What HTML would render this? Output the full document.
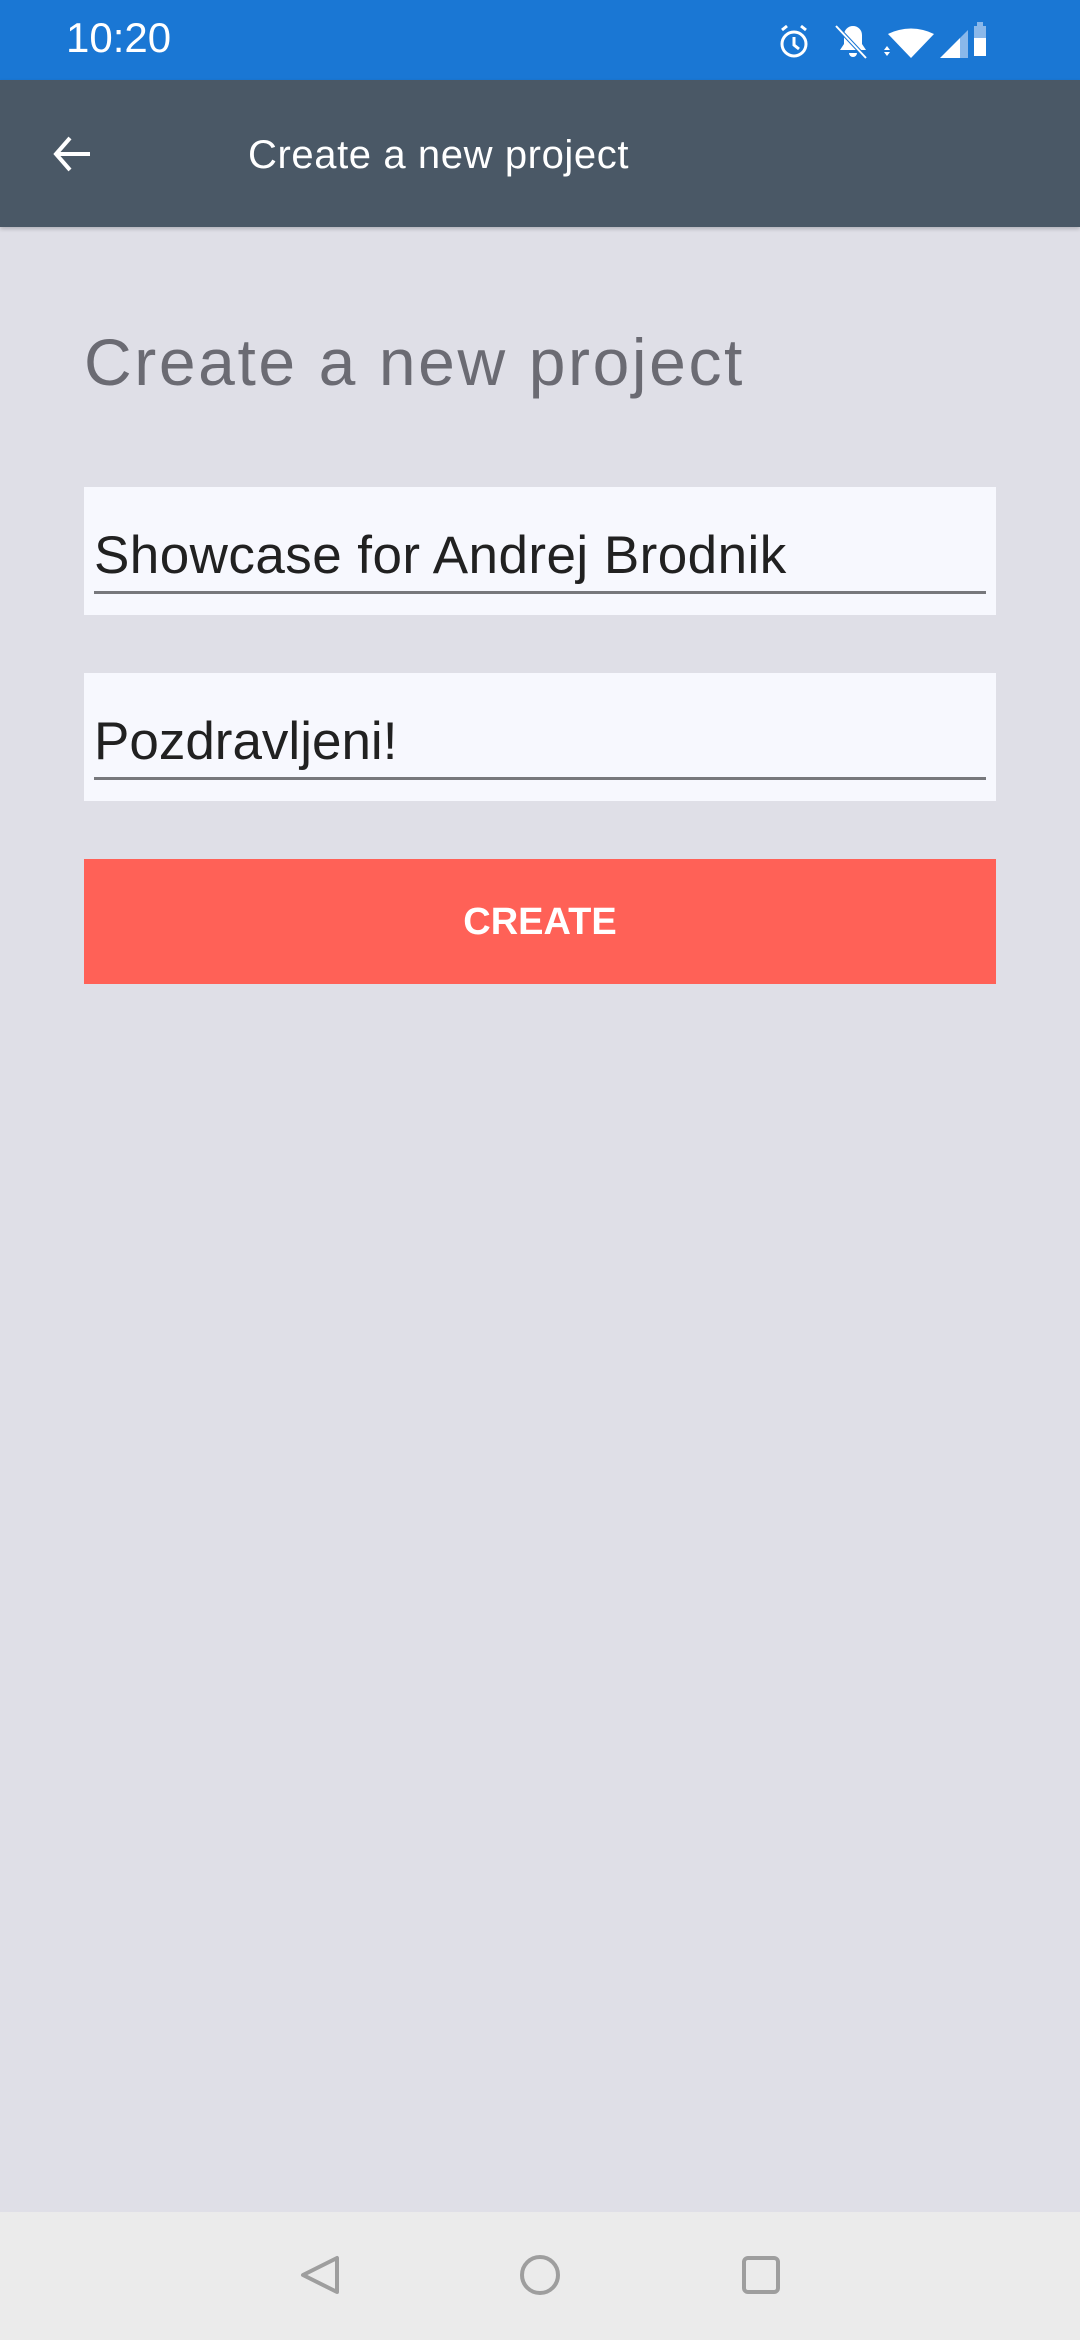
<!DOCTYPE html>
<html><head><meta charset="utf-8"><style>
*{margin:0;padding:0;box-sizing:border-box}
body{width:1080px;height:2340px;background:#dfdfe7;font-family:"Liberation Sans",Roboto,sans-serif;position:relative;overflow:hidden}
.abs{position:absolute}
</style></head><body>
<div class="abs" style="left:0;top:0;width:1080px;height:80px;background:#1a77d4"></div>
<div class="abs" style="left:66px;top:14px;font-size:42px;color:#fff">10:20</div>
<svg class="abs" style="left:770px;top:18px" width="220" height="44" viewBox="0 0 220 44">
 <g fill="none" stroke="#fff" stroke-width="3"><circle cx="24" cy="26" r="12"/><path d="M24 19v8l5 4M12 12l5-4M36 12l-5-4"/></g>
 <path d="M70 32h26l-4-6v-9a9 9 0 0 0-18 0v9z M79 35h8a4 4 0 0 1-8 0z" fill="#fff"/>
 <path d="M66 8l30 32" stroke="#1a77d4" stroke-width="4"/><path d="M66 8l30 32" stroke="#fff" stroke-width="2"/>
 <path d="M118 16a40 30 0 0 1 46 0l-23 24z" fill="#fff"/>
 <path d="M114 32l3-4 3 4zM114 34l3 4 3-4z" fill="#fff"/>
 <path d="M170 40l20-20v20z" fill="#fff"/><path d="M190 20l8-8v28h-8z" fill="#8ab8ea"/>
 <rect x="207" y="4" width="6" height="4" fill="#8ab8ea"/><rect x="204" y="8" width="12" height="12" fill="#8ab8ea"/><rect x="204" y="20" width="12" height="18" fill="#fff"/>
</svg>
<div class="abs" style="left:0;top:80px;width:1080px;height:147px;background:#4a5866;box-shadow:0 2px 4px rgba(0,0,0,.2)"></div>
<svg class="abs" style="left:48px;top:130px" width="48" height="48" viewBox="0 0 48 48"><path d="M42 24H8M22 8L8 24l14 16" fill="none" stroke="#fff" stroke-width="4"/></svg>
<div class="abs" style="left:248px;top:133px;font-size:40px;color:#fff;letter-spacing:0.6px">Create a new project</div>
<div class="abs" style="left:84px;top:324px;font-size:66px;color:#6b6b73;letter-spacing:2.6px">Create a new project</div>
<div class="abs" style="left:84px;top:487px;width:912px;height:128px;background:#f7f8fe"></div>
<div class="abs" style="left:94px;top:525px;font-size:53px;color:#212121;letter-spacing:0.45px">Showcase for Andrej Brodnik</div>
<div class="abs" style="left:94px;top:591px;width:892px;height:3px;background:#77787c"></div>
<div class="abs" style="left:84px;top:673px;width:912px;height:128px;background:#f7f8fe"></div>
<div class="abs" style="left:94px;top:711px;font-size:53px;color:#212121">Pozdravljeni!</div>
<div class="abs" style="left:94px;top:777px;width:892px;height:3px;background:#77787c"></div>
<div class="abs" style="left:84px;top:859px;width:912px;height:125px;background:#ff6157;color:#fff;font-weight:bold;font-size:38px;text-align:center;line-height:127px">CREATE</div>
<div class="abs" style="left:0;top:2212px;width:1080px;height:128px;background:#ebebeb"></div>
<svg class="abs" style="left:0;top:2240px" width="1080" height="72" viewBox="0 0 1080 72">
 <g fill="none" stroke="#9e9e9e" stroke-width="4"><path d="M337 18v34L303 35z" stroke-linejoin="round"/><circle cx="540" cy="35" r="18"/><rect x="744" y="18" width="34" height="34" rx="4"/></g>
</svg>
</body></html>
